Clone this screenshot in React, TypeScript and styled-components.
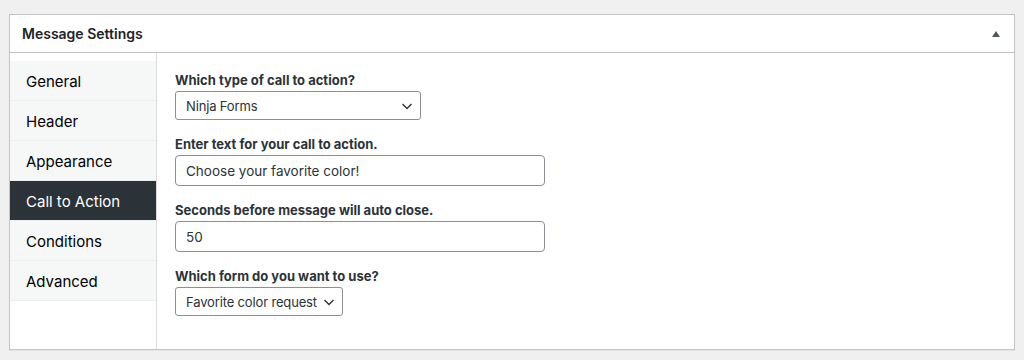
import React from 'react'
import styled, { createGlobalStyle } from 'styled-components'

const GlobalStyle = createGlobalStyle`
  body {
    margin: 0;
    background: #f0f0f1;
    font-family: Inter, 'Liberation Sans', sans-serif;
    color: #1d2327;
  }
`

const Page = styled.div`
  padding: 14px 9px 11px 9px;
`

const Panel = styled.div`
  background: #fff;
  border: 1px solid #c3c4c7;
  box-shadow: 0 1px 1px rgba(0, 0, 0, 0.04);
`

const PanelHeader = styled.div`
  display: flex;
  align-items: center;
  justify-content: space-between;
  height: 37px;
  padding: 0 12px 0 12px;
  border-bottom: 1px solid #c3c4c7;
`

const PanelTitle = styled.h2`
  margin: 0;
  font-size: 14px;
  font-weight: 600;
  color: #1d2327;
`

const Toggle = styled.span`
  width: 0;
  height: 0;
  border-left: 4.5px solid transparent;
  border-right: 4.5px solid transparent;
  border-bottom: 6px solid #50575e;
  margin-right: 2px;
`

const Body = styled.div`
  display: flex;
  min-height: 295px;
`

const Tabs = styled.ul`
  list-style: none;
  margin: 0;
  padding: 8px 0 0;
  width: 146px;
  border-right: 1px solid #dcdcde;
  flex-shrink: 0;
`

const Tab = styled.li<{ $active?: boolean }>`
  height: 39px;
  display: flex;
  align-items: center;
  padding: 1px 0 0 16px;
  box-sizing: border-box;
  height: 40px;
  font-size: 15px;
  color: ${({ $active }) => ($active ? '#fff' : '#000')};
  background: ${({ $active }) => ($active ? '#2c3338' : '#f6f7f7')};
  border-bottom: 1px solid #eeeeee;
`

const Content = styled.div`
  flex: 1;
  padding: 18px 18px;
  display: flex;
  flex-direction: column;
`

const Field = styled.div`
  display: flex;
  flex-direction: column;
  margin-bottom: 15px;
`

const Label = styled.label`
  font-size: 13px;
  font-weight: 700;
  color: #2c3338;
  line-height: 18px;
  margin-bottom: 2px;
`

const Select = styled.div<{ $width: number }>`
  width: ${({ $width }) => $width}px;
  height: 29px;
  box-sizing: border-box;
  border: 1px solid #8c8f94;
  border-radius: 3px;
  display: flex;
  align-items: center;
  justify-content: space-between;
  gap: 4px;
  padding: 0 7px 0 10px;
  font-size: 13px;
  letter-spacing: -0.15px;
  white-space: nowrap;
  color: #2c3338;
  background: #fff;
`

const Input = styled.div`
  width: 370px;
  height: 31px;
  box-sizing: border-box;
  border: 1px solid #8c8f94;
  border-radius: 4px;
  display: flex;
  align-items: center;
  padding: 0 10px;
  font-size: 13.5px;
  color: #2c3338;
`

const Chevron = () => (
  <svg width="12" height="12" viewBox="0 0 12 12">
    <path d="M1.5 4l4.5 4.5 4.5-4.5" fill="none" stroke="#2c3338" strokeWidth="1.4" />
  </svg>
)

const tabs = ['General', 'Header', 'Appearance', 'Call to Action', 'Conditions', 'Advanced']

export default function App() {
  return (
    <>
      <GlobalStyle />
      <Page>
        <Panel>
          <PanelHeader>
            <PanelTitle>Message Settings</PanelTitle>
            <Toggle />
          </PanelHeader>
          <Body>
            <Tabs>
              {tabs.map((t) => (
                <Tab key={t} $active={t === 'Call to Action'}>
                  {t}
                </Tab>
              ))}
            </Tabs>
            <Content>
              <Field>
                <Label>Which type of call to action?</Label>
                <Select $width={246}>
                  Ninja Forms
                  <Chevron />
                </Select>
              </Field>
              <Field>
                <Label>Enter text for your call to action.</Label>
                <Input>Choose your favorite color!</Input>
              </Field>
              <Field>
                <Label>Seconds before message will auto close.</Label>
                <Input>50</Input>
              </Field>
              <Field>
                <Label>Which form do you want to use?</Label>
                <Select $width={168}>
                  Favorite color request
                  <Chevron />
                </Select>
              </Field>
            </Content>
          </Body>
        </Panel>
      </Page>
    </>
  )
}
